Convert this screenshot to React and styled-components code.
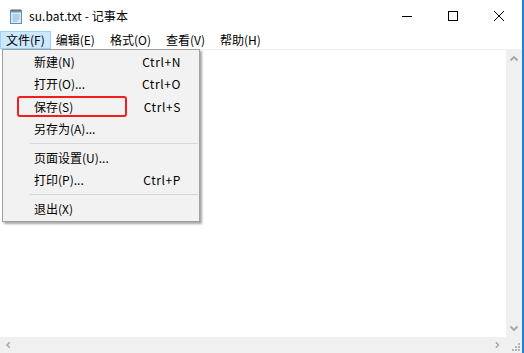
import React from 'react'
import styled, { createGlobalStyle } from 'styled-components'

const Global = createGlobalStyle`
  html, body { margin: 0; padding: 0; background: #fff; }
  body { font-family: "Noto Sans CJK SC", "Noto Sans", sans-serif; font-size: 12px; color: #000; }
`

const Window = styled.div`
  position: relative;
  width: 524px;
  height: 353px;
  box-sizing: border-box;
  border-right: 2px solid #1a82d6;
  display: flex;
  flex-direction: column;
  background: #fff;
  overflow: hidden;
`

const TitleBar = styled.div`
  height: 31px;
  display: flex;
  align-items: center;
  flex-shrink: 0;
`

const TitleIcon = styled.div`
  width: 16px;
  height: 16px;
  margin: 0 5px 0 8px;
  display: flex;
`

const TitleText = styled.div`
  flex: 1;
  font-size: 12px;
  line-height: 31px;
  letter-spacing: 0.1px;
`

const CtrlButton = styled.div`
  width: 46px;
  height: 31px;
  display: flex;
  align-items: center;
  justify-content: center;
`

const MenuBar = styled.div`
  height: 18px;
  display: flex;
  align-items: stretch;
  border-bottom: 1px solid #f0f0f0;
  flex-shrink: 0;
`

const MenuTitle = styled.div`
  padding: 0 ${p => p.$pad}px 0 5px;
  line-height: 16px;
  box-sizing: border-box;
  border: 1px solid ${p => (p.$active ? '#99d1ff' : 'transparent')};
  background: ${p => (p.$active ? '#cce8ff' : 'transparent')};
  margin-left: ${p => (p.$active ? 0 : -1)}px;
  white-space: nowrap;
`

const Body = styled.div`
  flex: 1;
  display: flex;
  min-height: 0;
`

const EditArea = styled.div`
  flex: 1;
  background: #fff;
`

const VScroll = styled.div`
  width: 16px;
  background: #f0f0f0;
  display: flex;
  flex-direction: column;
  justify-content: space-between;
  align-items: center;
  padding: 5px 0 5px;
`

const Bottom = styled.div`
  height: 16px;
  display: flex;
  flex-shrink: 0;
`

const HScroll = styled.div`
  flex: 1;
  background: #f0f0f0;
  display: flex;
  justify-content: space-between;
  align-items: center;
  padding: 0 5px;
`

const Corner = styled.div`
  width: 16px;
  background: #f0f0f0;
  display: flex;
  align-items: flex-end;
  justify-content: flex-end;
`

const Dropdown = styled.div`
  position: absolute;
  left: 2px;
  top: 49px;
  width: 198px;
  box-sizing: border-box;
  background: #f2f2f2;
  border: 1px solid #a0a0a0;
  box-shadow: 2px 2px 2px rgba(0, 0, 0, 0.35);
  padding: 0 0 1px;
`

const Item = styled.div`
  height: 22.5px;
  display: flex;
  align-items: center;
  justify-content: space-between;
  padding: 0 18px 0 31px;
  white-space: nowrap;
`

const Shortcut = styled.span`
  letter-spacing: 0.6px;
`

const Separator = styled.div`
  height: 6px;
  display: flex;
  align-items: center;
  padding: 0 1px 0 27px;
  &::after {
    content: '';
    flex: 1;
    height: 1px;
    background: #d7d7d7;
  }
`

const Highlight = styled.div`
  position: absolute;
  left: 14px;
  top: 46px;
  width: 110px;
  height: 21px;
  box-sizing: border-box;
  border: 2px solid #f21e1e;
  border-radius: 3px;
`

const NotepadIcon = () => (
  <svg width="16" height="16" viewBox="0 0 16 16">
    <rect x="2.5" y="2.5" width="11" height="13" fill="#d8ecf8" stroke="#5a8fb8" />
    <rect x="3" y="3" width="10" height="2" fill="#9cc7e6" />
    <path d="M4.5 7h7M4.5 9h7M4.5 11h7M4.5 13h5" stroke="#7aa6c8" strokeWidth="0.8" />
    <path d="M4 1v3M6 1v3M8 1v3M10 1v3M12 1v3" stroke="#555" strokeWidth="0.9" />
  </svg>
)

const Chevron = ({ dir }) => {
  const paths = {
    up: 'M1.5 5.5L5 2l3.5 3.5',
    down: 'M1.5 2.5L5 6l3.5-3.5',
    left: 'M6 1.5L2.5 5 6 8.5',
    right: 'M3.5 1.5L7 5 3.5 8.5',
  }
  const horiz = dir === 'left' || dir === 'right'
  return (
    <svg width={horiz ? 8 : 10} height={horiz ? 10 : 8} viewBox={horiz ? '0 0 10 10' : '0 0 10 8'}>
      <path d={paths[dir]} fill="none" stroke="#a6a6a6" strokeWidth="1.8" />
    </svg>
  )
}

const menus = [
  { label: '文件(F)', active: true, pad: 5 },
  { label: '编辑(E)', pad: 9 },
  { label: '格式(O)', pad: 9 },
  { label: '查看(V)', pad: 9 },
  { label: '帮助(H)', pad: 9 },
]

const fileItems = [
  { label: '新建(N)', key: 'Ctrl+N' },
  { label: '打开(O)...', key: 'Ctrl+O' },
  { label: '保存(S)', key: 'Ctrl+S' },
  { label: '另存为(A)...' },
  'sep',
  { label: '页面设置(U)...' },
  { label: '打印(P)...', key: 'Ctrl+P' },
  'sep',
  { label: '退出(X)' },
]

export default function App() {
  return (
    <>
      <Global />
      <Window>
        <TitleBar>
          <TitleIcon><NotepadIcon /></TitleIcon>
          <TitleText>su.bat.txt - 记事本</TitleText>
          <CtrlButton>
            <svg width="10" height="10" viewBox="0 0 10 10"><path d="M0 5.5h10" stroke="#000" /></svg>
          </CtrlButton>
          <CtrlButton>
            <svg width="10" height="10" viewBox="0 0 10 10"><rect x="0.5" y="0.5" width="9" height="9" fill="none" stroke="#000" /></svg>
          </CtrlButton>
          <CtrlButton>
            <svg width="10" height="10" viewBox="0 0 10 10"><path d="M0 0l10 10M10 0L0 10" stroke="#000" strokeWidth="1" /></svg>
          </CtrlButton>
        </TitleBar>
        <MenuBar>
          {menus.map(m => (
            <MenuTitle key={m.label} $active={m.active} $pad={m.pad}>{m.label}</MenuTitle>
          ))}
        </MenuBar>
        <Body>
          <EditArea />
          <VScroll>
            <Chevron dir="up" />
            <Chevron dir="down" />
          </VScroll>
        </Body>
        <Bottom>
          <HScroll>
            <Chevron dir="left" />
            <Chevron dir="right" />
          </HScroll>
          <Corner>
            <svg width="12" height="12" viewBox="0 0 12 12">
              {[[8, 2], [8, 5], [5, 5], [8, 8], [5, 8], [2, 8]].map(([x, y]) => (
                <rect key={`${x}-${y}`} x={x} y={y} width="2" height="2" fill="#b4b4b4" />
              ))}
            </svg>
          </Corner>
        </Bottom>
        <Dropdown>
          {fileItems.map((it, i) =>
            it === 'sep' ? (
              <Separator key={i} />
            ) : (
              <Item key={i}>
                <span>{it.label}</span>
                {it.key && <Shortcut>{it.key}</Shortcut>}
              </Item>
            )
          )}
          <Highlight />
        </Dropdown>
      </Window>
    </>
  )
}
